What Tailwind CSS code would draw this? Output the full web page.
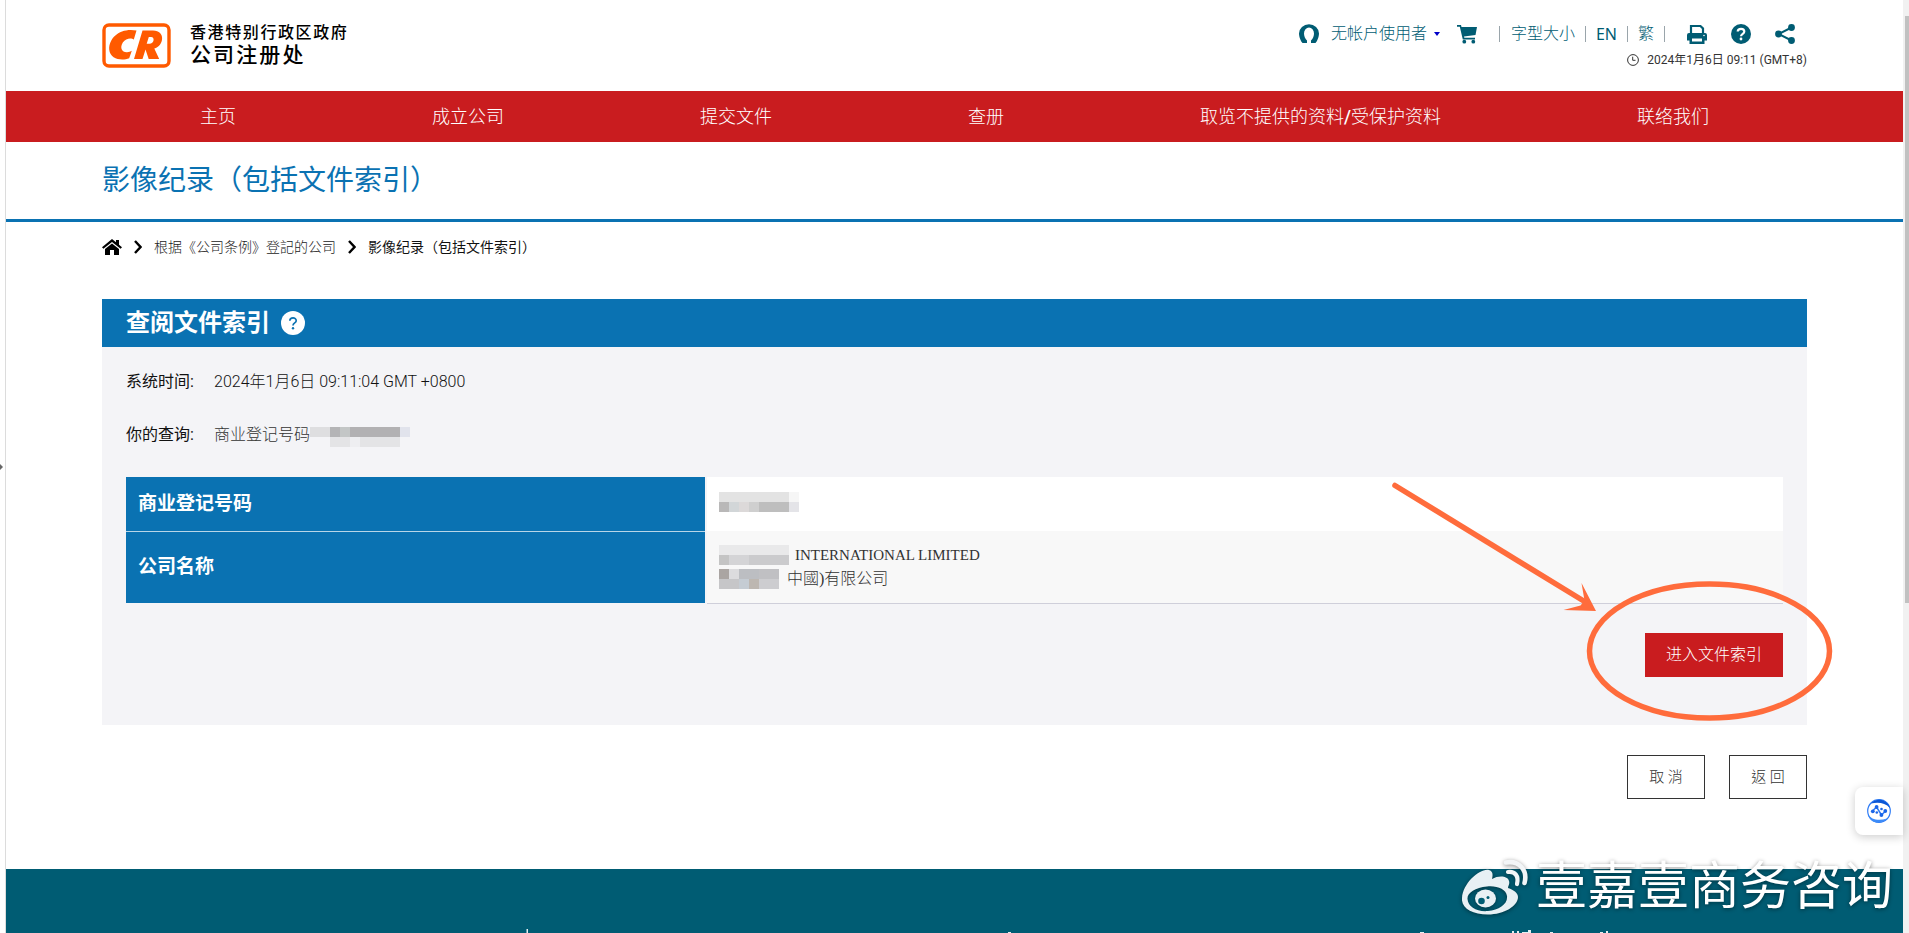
<!DOCTYPE html>
<html lang="zh-Hans">
<head>
<meta charset="utf-8">
<meta name="viewport" content="width=device-width, initial-scale=1">
<title>影像纪录（包括文件索引）</title>
<script src="https://cdn.jsdelivr.net/npm/@tailwindcss/browser@4"></script>
</head>
<body class="flex min-h-screen overflow-x-hidden bg-white font-['Roboto','Noto_Sans_CJK_SC',sans-serif] text-[#333]">

<!-- Left gutter with collapse handle -->
<div class="flex w-1.5 shrink-0 items-center border-r border-[#dcdcdc]">
  <svg class="h-2 w-1" viewBox="0 0 4 8" aria-hidden="true"><path d="M0 1l3 3-3 3z" fill="#666"/></svg>
</div>

<div class="relative flex min-w-0 flex-1 flex-col">

  <header class="flex h-[91px] items-start justify-between px-24">
    <a href="#" class="flex items-center gap-[18px] pt-[22px]">
      <svg class="h-[46px] w-[70px]" viewBox="0 0 70 46" role="img" aria-label="CR">
        <rect x="2" y="3" width="65" height="41" rx="5" fill="#fff" stroke="#ff5a00" stroke-width="3.4"/>
        <path d="M34.5 8.5 L31.8 17.5 C30 15.8 24 15.5 20.8 20.5 C17.5 26 20 30.4 25 30.2 C27 30.1 28.5 29.5 29.8 28.8 L27.2 36.2 C20 39 8 37.500 7.200 27.500 C6.800 15 19 5.500 34.500 8.500Z" fill="#ff5a00"/>
        <path fill-rule="evenodd" d="M40.500 8.500H51C64 8.500 62 24 52.300 26.500L57.200 37H46.700L43.500 27.500L40.500 37H32ZM46.800 15L44.700 21.800H47.500C52 21.800 53.300 15 49 15Z" fill="#ff5a00"/>
      </svg>
      <span class="flex flex-col font-medium text-black">
        <span class="text-base leading-5 tracking-widest">香港特别行政区政府</span>
        <span class="text-[21px] leading-6 tracking-widest">公司注册处</span>
      </span>
    </a>

    <div class="flex flex-col items-end pt-5">
      <div class="flex h-7 items-center pr-3 text-base font-light text-[#005c73]">
        <svg class="mr-3 h-5 w-5" viewBox="0 0 20 20" aria-hidden="true"><path d="M3.500 19C2 17.500 0 13 0 9.500A10 9.300 0 0 1 20 9.500C20 13 18 17.500 16.500 19H12V16.500C14 14.500 15 12 15 9.500A5 6 0 0 0 5 9.500C5 12 6 14.500 8 16.500V19Z" fill="#005c73"/></svg>
        <a href="#">无帐户使用者</a>
        <svg class="ml-[7px] h-1.5 w-1.5" viewBox="0 0 6 6" aria-hidden="true"><path d="M0 1h6L3 5z" fill="#0000c8"/></svg>
        <a href="#" aria-label="购物车" class="ml-[17px]"><svg class="h-5 w-5" viewBox="0 0 20 20" fill="#005c73"><path d="M0 1H4L4.500 3H20L18.500 11L7 12.500L7.300 13.800H18V15.500H5.800L2.800 2.800H0Z"/><circle cx="7.300" cy="17.700" r="1.900"/><circle cx="16.300" cy="17.700" r="1.900"/></svg></a>
        <span class="ml-[22px] h-4 w-px bg-[#9aa5ab]"></span>
        <a href="#" class="ml-[11px]">字型大小</a>
        <span class="ml-2.5 h-4 w-px bg-[#9aa5ab]"></span>
        <a href="#" class="ml-2.5 font-['Noto_Sans',sans-serif] font-normal">EN</a>
        <span class="ml-2.5 h-4 w-px bg-[#9aa5ab]"></span>
        <a href="#" class="ml-2.5">繁</a>
        <span class="ml-2.5 h-4 w-px bg-[#9aa5ab]"></span>
        <button type="button" aria-label="打印" class="ml-[22px]"><svg class="h-5 w-5" viewBox="0 0 20 20"><path d="M4 9V2H13.500L16 4.500V9" fill="none" stroke="#005c73" stroke-width="2.200"/><path fill-rule="evenodd" d="M2 9H18Q20 9 20 11V16.500H17.500V20H2.500V16.500H0V11Q0 9 2 9ZM5 14.500V17.600H15V14.500ZM17 10.700A.8.8 0 1 0 17 12.300A.8.8 0 0 0 17 10.700Z" fill="#005c73"/></svg></button>
        <button type="button" aria-label="帮助" class="ml-6"><svg class="h-5 w-5" viewBox="0 0 20 20"><circle cx="10" cy="10" r="10" fill="#005c73"/><path d="M6.700 7.500C6.900 3.900 13.300 3.900 13.300 7.500C13.300 9.800 10 9.800 10 12.300" fill="none" stroke="#fff" stroke-width="2.200"/><circle cx="10" cy="15" r="1.400" fill="#fff"/></svg></button>
        <button type="button" aria-label="分享" class="ml-6"><svg class="h-5 w-5" viewBox="0 0 20 20" fill="#005c73"><path d="M16.500 3.500L3.500 10L16.500 16.500" fill="none" stroke="#005c73" stroke-width="2"/><circle cx="16.500" cy="3.500" r="3.400"/><circle cx="3.500" cy="10" r="3.400"/><circle cx="16.500" cy="16.500" r="3.400"/></svg></button>
      </div>
      <div class="flex h-6 items-center gap-2 text-xs text-[#333]">
        <svg class="h-3 w-3" viewBox="0 0 12 12" fill="none" stroke="#333"><circle cx="6" cy="6" r="5.400"/><path d="M5.700 2.700V6.300H8.500"/></svg>
        <time>2024年1月6日 09:11 (GMT+8)</time>
      </div>
    </div>
  </header>

  <nav class="flex h-[51px] items-center justify-around bg-[#c91c1f] px-24 text-lg font-light text-white">
    <a href="#">主页</a>
    <a href="#">成立公司</a>
    <a href="#">提交文件</a>
    <a href="#">查册</a>
    <a href="#">取览不提供的资料<span class="font-medium">/</span>受保护资料</a>
    <a href="#">联络我们</a>
  </nav>

  <div class="flex h-20 items-center border-b-3 border-[#0a72b2] px-24">
    <h1 class="text-[28px] text-[#0a72b2]">影像纪录（包括文件索引）</h1>
  </div>

  <nav aria-label="breadcrumb" class="flex h-[50px] items-center px-24 text-sm">
    <a href="#" aria-label="主页"><svg class="h-4 w-5" viewBox="0 0 20 16" fill="#000"><path d="M10 0L14 3.200V1H17V5.700L20 8.200L18.600 9.700L10 2.900L1.400 9.700L0 8.200Z"/><path d="M10 4.500L17 10V16H12V11H8V16H3V10Z"/></svg></a>
    <svg class="ml-3 h-3.5 w-2" viewBox="0 0 8 14" fill="none" stroke="#000" stroke-width="2.400"><path d="M1 1L6.500 7L1 13"/></svg>
    <a href="#" class="ml-3 font-light text-[#222]">根据《公司条例》登記的公司</a>
    <svg class="ml-3 h-3.5 w-2" viewBox="0 0 8 14" fill="none" stroke="#000" stroke-width="2.400"><path d="M1 1L6.500 7L1 13"/></svg>
    <span class="ml-3 text-[#111]">影像纪录（包括文件索引）</span>
  </nav>

  <main class="px-24 pt-[27px]">
    <section class="relative bg-[#f4f4f7]">
      <div class="flex h-12 items-center gap-[11px] bg-[#0a72b2] px-6 text-white">
        <h2 class="text-2xl font-bold">查阅文件索引</h2>
        <button type="button" aria-label="帮助"><svg class="h-6 w-6" viewBox="0 0 24 24"><circle cx="12" cy="12" r="12" fill="#fff"/><path d="M8.800 9.800C9 6 15.200 6 15.200 9.700C15.200 12 12 11.800 12 14.500" fill="none" stroke="#0a72b2" stroke-width="1.700"/><circle cx="12" cy="17.200" r="1.200" fill="#0a72b2"/></svg></button>
      </div>

      <div class="px-6 pt-[23px] pb-12">
        <dl class="grid grid-cols-[88px_1fr] gap-y-[29px] text-base leading-6">
          <dt class="text-[#111]">系统时间:</dt>
          <dd class="font-light text-[#111]">2024年1月6日 09:11:04 GMT +0800</dd>
          <dt class="text-[#111]">你的查询:</dt>
          <dd class="flex items-center font-light">商业登记号码
            <svg class="mt-1 h-5 w-[100px]" viewBox="0 0 100 20" shape-rendering="crispEdges" aria-hidden="true">
              <path d="M0 0h20v10H0z" fill="#dedee0"/><path d="M20 0h10v10H20z" fill="#b4b4b6"/><path d="M30 0h10v10H30z" fill="#c3c6c6"/><path d="M40 0h50v10H40z" fill="#b2b1b3"/><path d="M90 0h10v10H90z" fill="#e1e3ec"/><path d="M20 10h20v10H20zM50 10h40v10H50z" fill="#e4e4e6"/><path d="M40 10h10v10H40z" fill="#eeeef1"/>
            </svg>
          </dd>
        </dl>

        <table class="mt-[30px] w-full border-collapse text-base">
          <colgroup><col class="w-[35%]"><col></colgroup>
          <tbody>
            <tr class="h-[54px]">
              <th scope="row" class="border-b border-[#b8d6e8] bg-[#0a72b2] px-3 text-left text-[19px] font-bold text-white">商业登记号码</th>
              <td class="border-l-2 border-[#f4f4f7] bg-white px-3">
                <svg class="-mt-1 h-5 w-20" viewBox="0 0 80 20" shape-rendering="crispEdges" aria-hidden="true">
                  <path d="M0 0h70v10H0z" fill="#e3e3e3"/><path d="M70 0h10v10H70z" fill="#f6f6f6"/><path d="M0 10h10v10H0z" fill="#b9b8b8"/><path d="M10 10h10v10H10z" fill="#d2d6d8"/><path d="M20 10h10v10H20z" fill="#dcd9d9"/><path d="M30 10h10v10H30z" fill="#cfcfcf"/><path d="M40 10h30v10H40z" fill="#bebebe"/><path d="M70 10h10v10H70z" fill="#e4e4e8"/>
                </svg>
              </td>
            </tr>
            <tr class="h-[72px]">
              <th scope="row" class="bg-[#0a72b2] px-3 text-left text-[19px] font-bold text-white">公司名称</th>
              <td class="border-b border-l-2 border-b-[#cfcfda] border-l-[#f4f4f7] bg-[#f8f8f8] px-3 font-['Liberation_Serif','Noto_Sans_CJK_TC',serif] font-light leading-6">
                <div class="flex items-center gap-1.5">
                  <svg class="h-5 w-[70px]" viewBox="0 0 70 20" shape-rendering="crispEdges" aria-hidden="true"><path d="M0 0h70v10H0z" fill="#e9e9ea"/><path d="M0 10h10v10H0z" fill="#c4c4c4"/><path d="M10 10h20v10H10z" fill="#d4d4d6"/><path d="M30 10h40v10H30z" fill="#cbcbcd"/></svg>
                  <span class="text-[15px]">INTERNATIONAL LIMITED</span>
                </div>
                <div class="flex items-center">
                  <svg class="mr-2 h-5 w-[60px]" viewBox="0 0 60 20" shape-rendering="crispEdges" aria-hidden="true"><path d="M0 0h10v10H0z" fill="#aaa5a2"/><path d="M10 0h10v10H10z" fill="#dcdcde"/><path d="M20 0h20v10H20z" fill="#bcbec2"/><path d="M40 0h20v10H40z" fill="#c0c0c3"/><path d="M0 10h20v10H0z" fill="#c6c6c8"/><path d="M20 10h10v10H20z" fill="#c5ccd3"/><path d="M30 10h10v10H30z" fill="#bdb7b1"/><path d="M40 10h20v10H40z" fill="#cdcdd0"/></svg>
                  <span>中國)有限公司</span>
                </div>
              </td>
            </tr>
          </tbody>
        </table>

        <div class="mt-[29px] flex justify-end">
          <button type="button" class="h-11 w-[138px] bg-[#c91c1f] text-base font-light text-white">进入文件索引</button>
        </div>
      </div>

      <!-- Arrow and ring calling out the index button -->
      <svg class="pointer-events-none absolute -right-7 bottom-0 h-[245px] w-[445px]" viewBox="0 0 445 245" aria-hidden="true">
        <path d="M5 5.500L197 123" stroke="#ff6c3c" stroke-width="5.500" stroke-linecap="round"/>
        <path d="M206 131L191.500 103L194.500 120.500L190.500 125.500L173.500 130Z" fill="#ff6c3c"/>
        <ellipse cx="319.500" cy="171" rx="120" ry="67" fill="none" stroke="#ff6c3c" stroke-width="5.500"/>
      </svg>
    </section>

    <div lang="zh-Hant" class="mt-[30px] mb-[70px] flex justify-end gap-6 font-['Noto_Sans_CJK_TC',sans-serif]">
      <button type="button" class="h-11 w-[78px] border border-[#333] bg-white text-[15px] font-light">取 消</button>
      <button type="button" class="h-11 w-[78px] border border-[#333] bg-white text-[15px] font-light">返 回</button>
    </div>
  </main>

  <footer class="relative min-h-16 flex-1 bg-[#005c73]">
    <div class="absolute inset-x-0 bottom-0 h-1">
      <svg class="h-1 w-full" viewBox="0 0 1897 4" preserveAspectRatio="none" fill="#e4eef1" aria-hidden="true"><path d="M520.500 0h1.500v4h-1.500zM1002 3h3v1h-3zM1414 3h4v1h-4zM1506 2h2v2h-2zM1511 2h2v2h-2zM1516 3h6v1h-6zM1522 1h3v3h-3zM1544 3h3v1h-3zM1594 3h3v1h-3zM1600 2h2v2h-2z"/></svg>
    </div>
  </footer>

  <!-- Floating assistant tab -->
  <button type="button" aria-label="助手" class="absolute right-0 bottom-[98px] flex h-12 w-12 items-center justify-center rounded-l-lg bg-white shadow-[0_2px_10px_rgba(0,0,0,0.2)]">
    <svg class="h-6 w-6" viewBox="0 0 24 24"><circle cx="12" cy="12" r="11.300" fill="#fff" stroke="#2f7cf6" stroke-width="1.200"/><path d="M4 4.500C9-1.500 20-.5 23 9C18 3.500 11 3 4 4.500Z" fill="#0b57d6"/><path d="M1 15C4 21 12 22 20 19.500C14 26 3 25 1 15Z" fill="#3c8bf8"/><path d="M5.500 12L9.500 8L14.500 16L18.500 12" fill="none" stroke="#2f7cf6" stroke-width="1.500"/><g fill="#1b66e8"><circle cx="5.800" cy="12.300" r="1.900"/><circle cx="9.600" cy="8" r="1.900"/><circle cx="14.400" cy="16" r="1.900"/><circle cx="18.300" cy="12" r="1.900"/><circle cx="14.500" cy="10" r="1.300"/><circle cx="9.800" cy="13.500" r="1.300"/></g></svg>
  </button>

  <!-- Publisher mark -->
  <div class="pointer-events-none absolute right-2.5 bottom-[18px] flex items-center gap-2 text-white drop-shadow-[0_1px_2px_rgba(0,0,0,0.45)]">
    <svg class="h-14 w-[66px]" viewBox="0 0 66 56" aria-hidden="true">
      <path fill-rule="evenodd" d="M0 39C1 24 18 9 27 11C31 12 31 16 30 20C37 16 46 17 47 22C48 25 46 27 46 29C52 31 56 34 56 38C56 47 42 55.500 26 55.500C10 55.500-1 49 0 39ZM5.500 40C6 48 15 53 26 52C37 51 46 45 45 37C44 30 35 26.500 25 27.500C13 28.500 5 34 5.500 40Z" fill="#e8f0f4"/>
      <ellipse cx="23.500" cy="39.500" rx="10.500" ry="9" fill="#e8f0f4"/><circle cx="19.500" cy="42" r="3.300" fill="#005c73"/><circle cx="26" cy="38.500" r="1.500" fill="#005c73"/>
      <path d="M46 13C53 12 57 17 55 25" fill="none" stroke="#f2f5f7" stroke-width="4.200" stroke-linecap="round"/><path d="M44 3.500C57 1 66 11 62.500 24" fill="none" stroke="#f2f5f7" stroke-width="4.600" stroke-linecap="round"/>
    </svg>
    <span class="text-[51px] leading-14">壹嘉壹商务咨询</span>
  </div>
</div>

<!-- Scroll track -->
<div class="flex w-1.5 shrink-0 flex-col bg-[#f1f1f1] pt-4 pl-0.5" aria-hidden="true">
  <div class="h-[64%] bg-[#c1c1c1]"></div>
</div>
</body>
</html>
